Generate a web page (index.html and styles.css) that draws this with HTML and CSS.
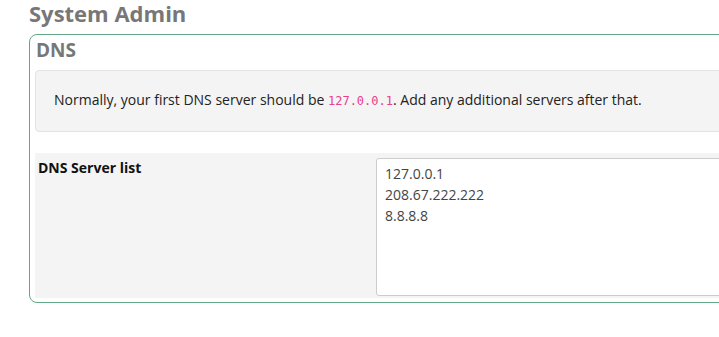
FILE: index.html
```html
<!DOCTYPE html>
<html lang="en">

<head>
    <meta charset="UTF-8">
    <meta name="viewport" content="width=device-width, initial-scale=1.0">
    <title>System Admin</title>
    <link rel="stylesheet" href="styles.css">
</head>

<body>
    <div class="page">
        <h1 class="page-title">System Admin</h1>

        <fieldset class="section">
            <h2 class="section-title">DNS</h2>

            <div class="well">
                Normally, your first DNS server should be <code>127.0.0.1</code>. Add any additional servers after that.
            </div>

            <div class="form-row">
                <label class="form-label" for="dns_servers">DNS Server list</label>
                <textarea id="dns_servers" class="form-input" rows="6">127.0.0.1
208.67.222.222
8.8.8.8</textarea>
            </div>
        </fieldset>
    </div>
</body>

</html>
```

FILE: styles.css
```css
html, body {
    overflow: hidden;
}

body {
    margin: 0;
    font-family: 'Open Sans', 'Liberation Sans', sans-serif;
    font-size: 14px;
    line-height: 20px;
    color: #222222;
    background-color: #ffffff;
}

.page {
    width: 760px;
    padding-left: 29px;
}

.page-title {
    margin: 0;
    height: 34px;
    font-size: 22px;
    line-height: 26px;
    font-weight: 700;
    color: #777777;
}

.section {
    margin: 0;
    padding: 5px 0 4px 5px;
    min-width: 0;
    border: 1px solid #63a886;
    border-radius: 8px;
}

.section-title {
    margin: 0 0 10px 1px;
    font-size: 19px;
    line-height: 20px;
    font-weight: 700;
    color: #777777;
}

.well {
    padding: 19px 19px 20px 18px;
    background-color: #f4f4f4;
    border: 1px solid #e3e3e3;
    border-radius: 4px;
    color: #222222;
}

.well code {
    font-family: 'DejaVu Sans Mono', 'Liberation Mono', monospace;
    font-size: 12px;
    color: #e83e8c;
}

.form-row {
    display: grid;
    grid-template-columns: 338px 1fr;
    margin-top: 21px;
    padding: 5px 0 2px 3px;
    background-color: #f4f4f4;
}

.form-label {
    font-weight: 700;
    color: #111111;
}

.form-input {
    box-sizing: border-box;
    height: 138px;
    margin: 0;
    padding: 4px 8px;
    font-family: inherit;
    font-size: 14px;
    line-height: 21px;
    color: #444444;
    background-color: #ffffff;
    border: 1px solid #cccccc;
    border-radius: 3px;
    resize: none;
}
```
